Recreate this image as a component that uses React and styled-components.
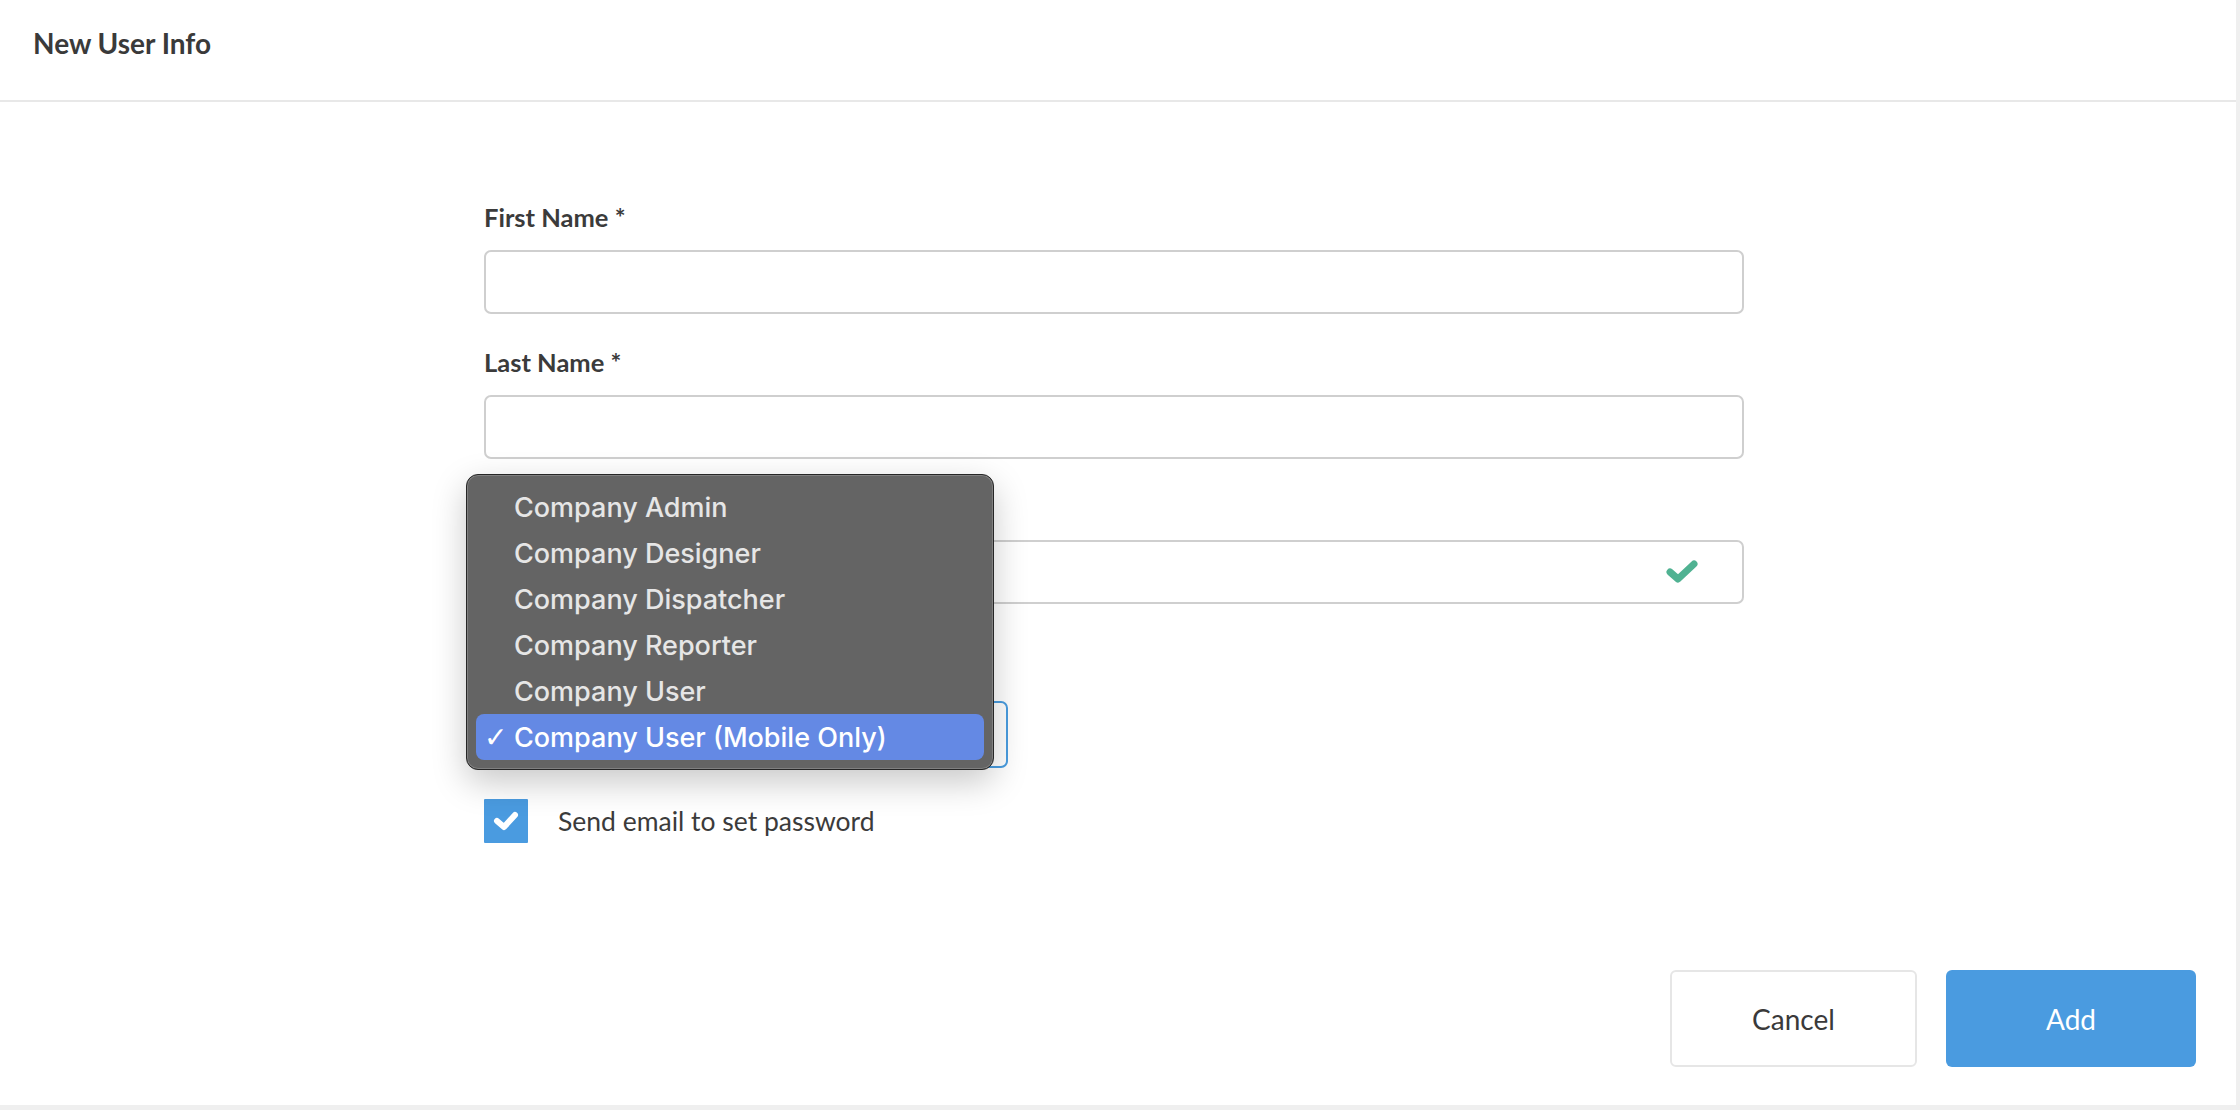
import React from "react";
import styled, { createGlobalStyle } from "styled-components";

const roles = [
  "Company Admin",
  "Company Designer",
  "Company Dispatcher",
  "Company Reporter",
  "Company User",
  "Company User (Mobile Only)",
];

const App = () => {
  return (
    <>
      <GlobalStyle />
      <Modal>
        <Header>
          <Title>New User Info</Title>
        </Header>
        <Body>
          <Form>
            <Field>
              <Label>First Name *</Label>
              <InputShell>
                <Input />
              </InputShell>
            </Field>
            <Field>
              <Label>Last Name *</Label>
              <InputShell>
                <Input />
              </InputShell>
            </Field>
            <Field $gap={49}>
              {/* label sits under the open menu */}
              <LabelSpace />
              <InputShell>
                <Input />
                <ValidIcon viewBox="0 0 32 24">
                  <polyline points="4,12 12,19 28,4" />
                </ValidIcon>
              </InputShell>
            </Field>
            <Field $gap={31}>
              <LabelSpace />
              <SelectBox />
            </Field>
            <CheckRow>
              <CheckBox>
                <svg viewBox="0 0 44 44" width="44" height="44">
                  <polyline points="13,22 20,28 31,16" />
                </svg>
              </CheckBox>
              <CheckLabel>Send email to set password</CheckLabel>
            </CheckRow>

            <Menu>
              {roles.map((role, i) => (
                <MenuItem key={role} $active={i === roles.length - 1}>
                  <Tick>{i === roles.length - 1 ? "✓" : ""}</Tick>
                  {role}
                </MenuItem>
              ))}
            </Menu>
          </Form>
        </Body>
        <Footer>
          <CancelButton>Cancel</CancelButton>
          <AddButton>Add</AddButton>
        </Footer>
      </Modal>
    </>
  );
};

const GlobalStyle = createGlobalStyle`
  html, body {
    margin: 0;
    padding: 0;
  }
  body {
    background: #efefef;
    font-family: "Lato", "Liberation Sans", sans-serif;
    color: #3b3b3b;
  }
  * {
    box-sizing: border-box;
  }
`;

const Modal = styled.div`
  width: 2236px;
  height: 1105px;
  background: #ffffff;
  display: flex;
  flex-direction: column;
`;

const Header = styled.div`
  height: 102px;
  padding: 26px 33px 0;
  border-bottom: 2px solid #e8e8e8;
`;

const Title = styled.h1`
  margin: 0;
  font-size: 28px;
  line-height: 34px;
  font-weight: 700;
  color: #3a3a3a;
`;

const Body = styled.div`
  flex: 1;
  padding-top: 100px;
`;

const Form = styled.div`
  position: relative;
  width: 1260px;
  margin: 0 auto;
  transform: translateX(-4px);
`;

const Field = styled.div`
  display: flex;
  flex-direction: column;
  margin-bottom: ${({ $gap }) => ($gap ? $gap : 33)}px;
`;

const Label = styled.label`
  font-size: 25.5px;
  line-height: 30px;
  font-weight: 700;
  color: #3b3b3b;
  margin-bottom: 18px;
`;

const LabelSpace = styled.div`
  height: 30px;
  margin-bottom: 18px;
`;

const InputShell = styled.div`
  height: 64px;
  display: flex;
  align-items: center;
  border: 2px solid #cfcfcf;
  border-radius: 7px;
  background: #fff;
  padding: 0 44px 0 16px;
`;

const Input = styled.input`
  flex: 1;
  height: 100%;
  border: none;
  outline: none;
  background: transparent;
  font-family: inherit;
  font-size: 26px;
`;

const ValidIcon = styled.svg`
  width: 32px;
  height: 24px;
  fill: none;
  stroke: #50b292;
  stroke-width: 7;
  stroke-linecap: round;
  stroke-linejoin: round;
`;

const SelectBox = styled.div`
  width: 524px;
  height: 67px;
  border: 2px solid #4a9de0;
  border-radius: 7px;
  background: #fff;
`;

const CheckRow = styled.div`
  display: flex;
  align-items: center;
  gap: 30px;
`;

const CheckBox = styled.div`
  width: 44px;
  height: 44px;
  background: #4a9be0;
  border-radius: 1px;

  svg {
    display: block;
    fill: none;
    stroke: #fff;
    stroke-width: 6;
    stroke-linecap: round;
    stroke-linejoin: round;
  }
`;

const CheckLabel = styled.span`
  font-size: 26.5px;
  color: #3b3b3b;
`;

const Menu = styled.div`
  position: absolute;
  left: -18px;
  top: 272px;
  width: 528px;
  padding: 9px;
  background: #646464;
  border: 1px solid #262626;
  border-radius: 12px;
  box-shadow: inset 0 0 0 1px rgba(255, 255, 255, 0.18),
    0 12px 34px rgba(0, 0, 0, 0.22);
`;

const MenuItem = styled.div`
  height: 46px;
  display: flex;
  align-items: center;
  border-radius: 8px;
  font-family: "Inter", "Liberation Sans", sans-serif;
  font-size: 27px;
  font-weight: 500;
  color: ${({ $active }) => ($active ? "#ffffff" : "#e6e6e6")};
  background: ${({ $active }) => ($active ? "#6489e4" : "transparent")};
`;

const Tick = styled.span`
  width: 38px;
  padding-left: 8px;
  font-family: "DejaVu Sans", sans-serif;
  font-size: 28px;
  font-weight: 700;
`;

const Footer = styled.div`
  display: flex;
  justify-content: flex-end;
  gap: 29px;
  padding: 0 40px 38px;
`;

const Button = styled.button`
  height: 97px;
  border-radius: 6px;
  font-family: "Lato", "Liberation Sans", sans-serif;
  font-size: 28px;
  cursor: pointer;
`;

const CancelButton = styled(Button)`
  width: 247px;
  background: #fff;
  border: 2px solid #e6e6e6;
  color: #3a3a3a;
`;

const AddButton = styled(Button)`
  width: 250px;
  background: #4a9be0;
  border: none;
  color: #fff;
`;

export default App;
